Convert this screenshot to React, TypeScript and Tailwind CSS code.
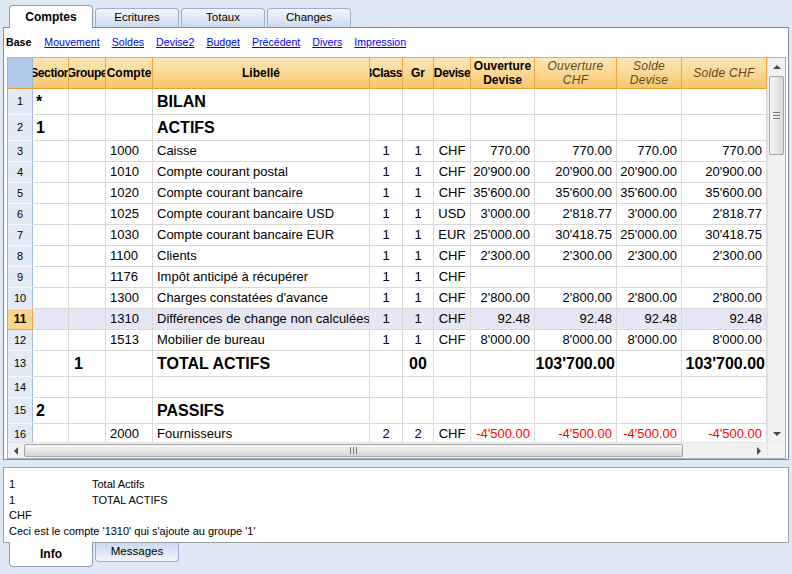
const cols = "grid grid-cols-[25px_36px_37px_47px_217px_33px_31px_37px_64px_82px_65px_85px]";

type Row = {
  n: number;
  big?: boolean;
  sel?: boolean;
  red?: boolean;
  c: string[];
};

const rows: Row[] = [
  { n: 1, big: true, c: ["*", "", "", "BILAN"] },
  { n: 2, big: true, c: ["1", "", "", "ACTIFS"] },
  { n: 3, c: ["", "", "1000", "Caisse", "1", "1", "CHF", "770.00", "770.00", "770.00", "770.00"] },
  { n: 4, c: ["", "", "1010", "Compte courant postal", "1", "1", "CHF", "20'900.00", "20'900.00", "20'900.00", "20'900.00"] },
  { n: 5, c: ["", "", "1020", "Compte courant bancaire", "1", "1", "CHF", "35'600.00", "35'600.00", "35'600.00", "35'600.00"] },
  { n: 6, c: ["", "", "1025", "Compte courant bancaire USD", "1", "1", "USD", "3'000.00", "2'818.77", "3'000.00", "2'818.77"] },
  { n: 7, c: ["", "", "1030", "Compte courant bancaire EUR", "1", "1", "EUR", "25'000.00", "30'418.75", "25'000.00", "30'418.75"] },
  { n: 8, c: ["", "", "1100", "Clients", "1", "1", "CHF", "2'300.00", "2'300.00", "2'300.00", "2'300.00"] },
  { n: 9, c: ["", "", "1176", "Impôt anticipé à récupérer", "1", "1", "CHF"] },
  { n: 10, c: ["", "", "1300", "Charges constatées d'avance", "1", "1", "CHF", "2'800.00", "2'800.00", "2'800.00", "2'800.00"] },
  { n: 11, sel: true, c: ["", "", "1310", "Différences de change non calculées", "1", "1", "CHF", "92.48", "92.48", "92.48", "92.48"] },
  { n: 12, c: ["", "", "1513", "Mobilier de bureau", "1", "1", "CHF", "8'000.00", "8'000.00", "8'000.00", "8'000.00"] },
  { n: 13, big: true, c: ["", "1", "", "TOTAL ACTIFS", "", "00", "", "", "103'700.00", "", "103'700.00"] },
  { n: 14, c: [] },
  { n: 15, big: true, c: ["2", "", "", "PASSIFS"] },
  { n: 16, red: true, c: ["", "", "2000", "Fournisseurs", "2", "2", "CHF", "-4'500.00", "-4'500.00", "-4'500.00", "-4'500.00"] },
];

// alignment per data column
const align = [
  "justify-start pl-[3px]",
  "justify-start pl-[5px]",
  "justify-start pl-[4px]",
  "justify-start pl-[4px]",
  "justify-center",
  "justify-center",
  "justify-center",
  "justify-end",
  "justify-end",
  "justify-end",
  "justify-end",
];

const Arrow = ({ dir }: { dir: "up" | "down" | "left" | "right" }) => {
  const pts = {
    up: "0,4 4,0 8,4",
    down: "0,0 8,0 4,4",
    left: "4,0 4,8 0,4",
    right: "0,0 0,8 4,4",
  }[dir];
  const vert = dir === "up" || dir === "down";
  return (
    <svg width={vert ? 8 : 4} height={vert ? 4 : 8} viewBox={vert ? "0 0 8 4" : "0 0 4 8"}>
      <polygon points={pts} fill="#4a4a4a" />
    </svg>
  );
};

const Header = () => (
  <div className={`${cols} h-[31px] border-b border-[#f39c2f]`}>
    <div className="bg-[#b0caec] border-r border-[#9db5d6]" />
    {[
      { t: "Section", tight: true },
      { t: "Groupe", tight: true },
      { t: "Compte" },
      { t: "Libellé" },
      { t: "BClasse", tight: true },
      { t: "Gr" },
      { t: "Devise", tight: true },
      { t: "Ouverture Devise", wrap: true },
      { t: "Ouverture CHF", wrap: true, it: true },
      { t: "Solde Devise", wrap: true, it: true },
      { t: "Solde CHF", it: true },
    ].map((h, i) => (
      <div
        key={i}
        className={`bg-linear-to-b from-[#fde8b8] to-[#f6c66c] border-r border-[#f2a445] flex items-center justify-center text-center overflow-hidden text-[12px] leading-[14px] ${
          h.wrap ? "whitespace-normal px-[2px]" : "whitespace-nowrap"
        } ${h.tight ? "tracking-[-0.4px]" : ""} ${
          h.it ? "italic font-normal text-[#5b4a24] tracking-[0.3px]" : "font-bold text-black"
        }`}
      >
        {h.t}
      </div>
    ))}
  </div>
);

const GridRow = ({ r }: { r: Row }) => {
  const h = r.big ? "h-[26px]" : "h-[21px]";
  return (
    <div className={`${cols} ${h} ${r.sel ? "bg-[#e6e6f4]" : "bg-white"}`}>
      <div
        className={`flex items-center justify-center border-r border-b text-[11px] ${
          r.sel
            ? "bg-[#fcd48b] border-[#f2a445] font-bold text-[12px]"
            : "bg-[#e2eaf5] border-r-[#a9bcd6] border-b-[#f4f7fb]"
        }`}
      >
        {r.n}
      </div>
      {align.map((a, i) => (
        <div
          key={i}
          className={`flex items-center overflow-hidden whitespace-nowrap border-r border-b border-[#d9d9d9] ${a} ${
            i >= 7 ? (r.big ? "pr-[1px]" : "pr-[4px]") : ""
          } ${r.big ? "text-[16px] font-bold" : "text-[13px]"} ${
            r.red && i >= 7 ? "text-[#ff0000]" : "text-black"
          }`}
        >
          {r.c[i] ?? ""}
        </div>
      ))}
    </div>
  );
};

const VScroll = () => (
  <div className="w-[18px] flex flex-col bg-[#f1f1f1] border-l border-[#e4e4e4]">
    <div className="h-[18px] flex items-center justify-center">
      <Arrow dir="up" />
    </div>
    <div className="mx-[1px] h-[79px] rounded-[2px] border border-[#a5a5a5] bg-linear-to-r from-[#f7f7f7] to-[#d9d9d9] flex flex-col items-center justify-center gap-[2px]">
      <div className="w-[7px] h-px bg-[#7a7a7a]" />
      <div className="w-[7px] h-px bg-[#7a7a7a]" />
      <div className="w-[7px] h-px bg-[#7a7a7a]" />
    </div>
    <div className="flex-1" />
    <div className="h-[17px] flex items-center justify-center">
      <Arrow dir="down" />
    </div>
    <div className="h-[16px] bg-[#f4f4f4]" />
  </div>
);

const HScroll = () => (
  <div className="h-[16px] flex items-stretch bg-[#f1f1f1] border-t border-[#e4e4e4]">
    <div className="w-[16px] flex items-center justify-center">
      <Arrow dir="left" />
    </div>
    <div className="w-[659px] my-[1px] rounded-[2px] border border-[#a5a5a5] bg-linear-to-b from-[#f7f7f7] to-[#d6d6d6] flex items-center justify-center gap-[2px]">
      <div className="w-px h-[7px] bg-[#7a7a7a]" />
      <div className="w-px h-[7px] bg-[#7a7a7a]" />
      <div className="w-px h-[7px] bg-[#7a7a7a]" />
    </div>
    <div className="flex-1" />
    <div className="w-[17px] flex items-center justify-center">
      <Arrow dir="right" />
    </div>
  </div>
);

const links = ["Mouvement", "Soldes", "Devise2", "Budget", "Précédent", "Divers", "Impression"];

const App = () => {
  return (
    <div className="w-[792px] h-[574px] overflow-hidden bg-[#dfe8f5] flex flex-col font-['Liberation_Sans',Arial,sans-serif] text-black">
      {/* top tabs */}
      <div className="h-[27px] flex items-end pl-[9px] gap-[2px] relative z-10">
        <div className="h-[23px] w-[84px] -mb-px bg-white border border-b-0 border-[#8e9bb4] rounded-t-[4px] flex items-center justify-center font-bold text-[12px]">
          Comptes
        </div>
        {["Ecritures", "Totaux", "Changes"].map((t) => (
          <div
            key={t}
            className="h-[19px] w-[84px] bg-linear-to-b from-[#f4f7fc] to-[#cdd9ee] border border-b-0 border-[#9eaed0] rounded-t-[4px] flex items-center justify-center text-[11.5px]"
          >
            {t}
          </div>
        ))}
      </div>

      {/* main panel */}
      <div className="mx-[3px] h-[433px] border border-[#848b96] bg-white flex flex-col">
        <div className="h-[29px] flex items-center gap-[12px] pl-[2px] text-[10.6px]">
          <span className="font-bold mr-[1px]">Base</span>
          {links.map((l) => (
            <span key={l} className="text-[#0000ff] underline underline-offset-[1px]">
              {l}
            </span>
          ))}
        </div>
        <div className="ml-[3px] w-[779px] h-[402px] border border-[#a3b3c9] flex">
          <div className="w-[759px] flex flex-col">
            <Header />
            <div className="h-[353px] overflow-hidden">
              {rows.map((r) => (
                <GridRow key={r.n} r={r} />
              ))}
            </div>
            <HScroll />
          </div>
          <VScroll />
        </div>
      </div>

      {/* info panel */}
      <div className="mt-[7px] mx-[3px] h-[76px] border border-[#9a9fa8] bg-white pt-[9px] pl-[5px] text-[11px] leading-[15.5px]">
        <div className="flex">
          <span className="w-[83px]">1</span>
          <span>Total Actifs</span>
        </div>
        <div className="flex">
          <span className="w-[83px]">1</span>
          <span>TOTAL ACTIFS</span>
        </div>
        <div>CHF</div>
        <div>Ceci est le compte '1310' qui s'ajoute au groupe '1'</div>
      </div>

      {/* bottom tabs */}
      <div className="flex items-start pl-[9px] gap-[2px] relative">
        <div className="h-[25px] w-[84px] -mt-px bg-white border border-t-0 border-[#8e9bb4] rounded-b-[4px] flex items-center justify-center font-bold text-[12px]">
          Info
        </div>
        <div className="h-[19px] w-[84px] bg-linear-to-b from-[#cdd9ee] to-[#f0f4fb] border border-t-0 border-[#9eaed0] rounded-b-[4px] flex items-center justify-center text-[11.5px]">
          Messages
        </div>
      </div>
    </div>
  );
};

export default App;
